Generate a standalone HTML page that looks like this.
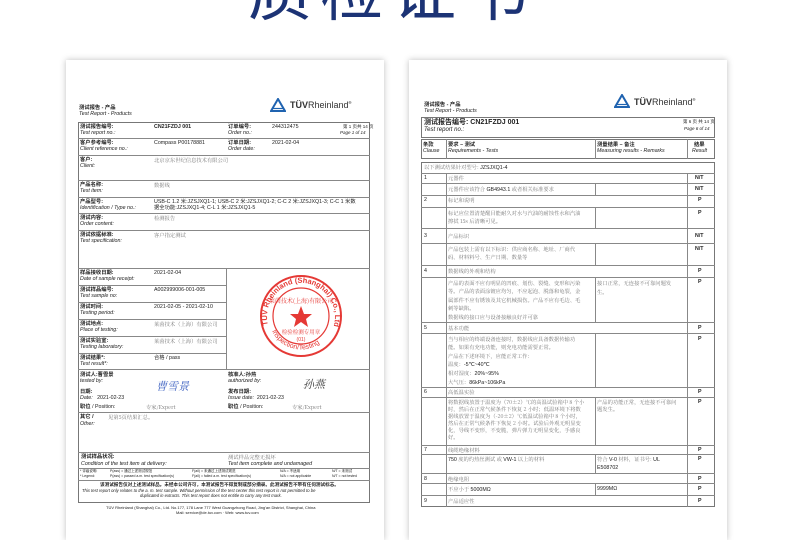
<!DOCTYPE html>
<html><head><meta charset="utf-8"><style>
*{margin:0;padding:0;box-sizing:border-box}
body{width:790px;height:530px;background:#fff;position:relative;overflow:hidden;font-family:"Liberation Sans","Noto Sans CJK SC",sans-serif;color:#222}
.title{position:absolute;left:248px;top:-44px;font-size:64px;line-height:1;color:#1c3375;letter-spacing:8px;font-family:"Noto Sans CJK SC",sans-serif;white-space:nowrap}
.page{position:absolute;top:60px;height:480px;background:#fff;box-shadow:0 0 6px rgba(0,0,0,.25)}
.t{position:absolute;font-size:5.3px;line-height:6.5px;white-space:nowrap}
.b{font-weight:bold}
.i{font-style:italic}
.g{color:#777;font-family:"Noto Serif CJK SC",serif}
.box{position:absolute;border:1px solid #777}
.h{position:absolute;height:1px;background:#888}
.v{position:absolute;width:1px;background:#888}
.logo{position:absolute;font-size:9px;font-weight:bold;color:#333;white-space:nowrap}
.logo span{font-weight:normal}
</style></head><body>
<div class="title">质检证书</div>

<!-- LEFT PAGE -->
<div class="page" style="left:66px;width:318px"></div>
<div class="t b" style="left:79px;top:105px">测试报告 - 产品</div>
<div class="t i" style="left:79px;top:111px">Test Report - Products</div>
<svg style="position:absolute;left:270px;top:98px" width="16" height="14"><polygon points="8,1 15,13 1,13" fill="none" stroke="#1f63b0" stroke-width="2"/><line x1="3" y1="10.5" x2="13" y2="10.5" stroke="#1f63b0" stroke-width="1.2"/></svg>
<div class="logo" style="left:290px;top:100px">TÜV<span>Rheinland</span><sup style="font-size:4px">®</sup></div>

<div class="box" style="left:78px;top:122px;width:292px;height:381px"></div>
<div class="h" style="left:78px;top:138px;width:292px"></div>
<div class="h" style="left:78px;top:155px;width:292px"></div>
<div class="h" style="left:78px;top:180px;width:292px"></div>
<div class="h" style="left:78px;top:197px;width:292px"></div>
<div class="h" style="left:78px;top:213px;width:292px"></div>
<div class="h" style="left:78px;top:230px;width:292px"></div>
<div class="h" style="left:78px;top:268px;width:292px"></div>
<div class="h" style="left:78px;top:285px;width:148px"></div>
<div class="h" style="left:78px;top:302px;width:148px"></div>
<div class="h" style="left:78px;top:319px;width:148px"></div>
<div class="h" style="left:78px;top:336px;width:148px"></div>
<div class="h" style="left:78px;top:353px;width:148px"></div>
<div class="v" style="left:226px;top:268px;height:101px"></div>
<div class="h" style="left:78px;top:369px;width:292px"></div>
<div class="h" style="left:78px;top:412px;width:292px"></div>
<div class="h" style="left:78px;top:452px;width:292px"></div>
<div class="h" style="left:78px;top:468px;width:292px"></div>
<div class="h" style="left:78px;top:480px;width:292px"></div>

<div class="t b" style="left:80px;top:124px">测试报告编号:</div><div class="t i" style="left:80px;top:130px">Test report no.:</div>
<div class="t b" style="left:154px;top:124px">CN21FZDJ 001</div>
<div class="t b" style="left:228px;top:124px">订单编号:</div><div class="t i" style="left:228px;top:130px">Order no.:</div>
<div class="t" style="left:272px;top:124px">244312475</div>
<div class="t" style="left:343px;top:124px;font-size:4.5px">第 1 页共 14 页</div><div class="t i" style="left:340px;top:130px;font-size:4.5px">Page 1 of 14</div>
<div class="t b" style="left:80px;top:140px">客户参考编号:</div><div class="t i" style="left:80px;top:146px">Client reference no.:</div>
<div class="t" style="left:154px;top:140px">Compass P00178881</div>
<div class="t b" style="left:228px;top:140px">订单日期:</div><div class="t i" style="left:228px;top:146px">Order date:</div>
<div class="t" style="left:272px;top:140px">2021-02-04</div>
<div class="t b" style="left:80px;top:157px">客户:</div><div class="t i" style="left:80px;top:163px">Client:</div>
<div class="t g" style="left:154px;top:157px">北京京东世纪信息技术有限公司</div>
<div class="t b" style="left:80px;top:182px">产品名称:</div><div class="t i" style="left:80px;top:188px">Test item:</div>
<div class="t g" style="left:154px;top:182px">数据线</div>
<div class="t b" style="left:80px;top:199px">产品型号:</div><div class="t i" style="left:80px;top:205px">Identification / Type no.:</div>
<div class="t" style="left:154px;top:199px">USB-C 1.2 米:JZSJXQ1-1; USB-C 2 米:JZSJXQ1-2; C-C 2 米:JZSJXQ1-3; C-C 1 米数</div>
<div class="t" style="left:154px;top:205px">据全功能:JZSJXQ1-4; C-L 1 米:JZSJXQ1-5</div>
<div class="t b" style="left:80px;top:215px">测试内容:</div><div class="t i" style="left:80px;top:221px">Order content:</div>
<div class="t g" style="left:154px;top:215px">检测报告</div>
<div class="t b" style="left:80px;top:232px">测试依据标准:</div><div class="t i" style="left:80px;top:238px">Test specification:</div>
<div class="t g" style="left:154px;top:232px">客户指定测试</div>

<div class="t b" style="left:80px;top:270px">样品接收日期:</div><div class="t i" style="left:80px;top:276px">Date of sample receipt:</div>
<div class="t" style="left:154px;top:270px">2021-02-04</div>
<div class="t b" style="left:80px;top:287px">测试样品编号:</div><div class="t i" style="left:80px;top:293px">Test sample no:</div>
<div class="t" style="left:154px;top:287px">A002999006-001-005</div>
<div class="t b" style="left:80px;top:304px">测试时间:</div><div class="t i" style="left:80px;top:310px">Testing period:</div>
<div class="t" style="left:154px;top:304px">2021-02-05 - 2021-02-10</div>
<div class="t b" style="left:80px;top:321px">测试地点:</div><div class="t i" style="left:80px;top:327px">Place of testing:</div>
<div class="t g" style="left:154px;top:321px">莱茵技术（上海）有限公司</div>
<div class="t b" style="left:80px;top:338px">测试实验室:</div><div class="t i" style="left:80px;top:344px">Testing laboratory:</div>
<div class="t g" style="left:154px;top:338px">莱茵技术（上海）有限公司</div>
<div class="t b" style="left:80px;top:355px">测试结果*:</div><div class="t i" style="left:80px;top:361px">Test result*:</div>
<div class="t" style="left:154px;top:355px">合格 / pass</div>

<svg style="position:absolute;left:258px;top:273px" width="86" height="86" viewBox="0 0 86 86">
<circle cx="43" cy="43" r="40" fill="none" stroke="#e53935" stroke-width="2"/>
<circle cx="43" cy="43" r="28" fill="none" stroke="#e53935" stroke-width="1.2"/>
<polygon points="43,33 46,41 54,41 48,46 50,54 43,49 36,54 38,46 32,41 40,41" fill="#e53935"/>
<defs><path id="arc" d="M10,52 A34,34 0 1,1 76,52"/><path id="arc2" d="M14,58 A32,32 0 0,0 72,58"/></defs>
<text font-size="7.5" fill="#e53935" font-weight="bold" font-family="Liberation Sans"><textPath href="#arc">TÜV Rheinland (Shanghai) Co., Ltd.</textPath></text>
<text font-size="7" fill="#e53935" font-family="Liberation Sans"><textPath href="#arc2">Inspection/Testing</textPath></text>
<text x="43" y="30" font-size="6" fill="#e53935" text-anchor="middle" font-family="Noto Serif CJK SC">莱茵技术(上海)有限公司</text>
<text x="43" y="61" font-size="5.5" fill="#e53935" text-anchor="middle" font-family="Noto Serif CJK SC">检验检测专用章</text>
<text x="43" y="68" font-size="5" fill="#e53935" text-anchor="middle">(01)</text>
</svg>

<div class="t b" style="left:80px;top:372px">测试人:曹雪景</div><div class="t i" style="left:80px;top:378px">tested by:</div>
<div class="t b" style="left:80px;top:389px">日期:</div><div class="t" style="left:80px;top:395px"><i>Date:</i>&nbsp;&nbsp;&nbsp;2021-02-23</div>
<div class="t" style="left:80px;top:404px"><b>职位</b> / Position:</div><div class="t g" style="left:146px;top:404px">专家/Expert</div>
<div class="t b" style="left:228px;top:372px">核准人:孙燕</div><div class="t i" style="left:228px;top:378px">authorized by:</div>
<div class="t b" style="left:228px;top:389px">发布日期:</div><div class="t" style="left:228px;top:395px"><i>Issue date:</i>&nbsp;&nbsp;2021-02-23</div>
<div class="t" style="left:228px;top:404px"><b>职位</b> / Position:</div><div class="t g" style="left:292px;top:404px">专家/Expert</div>
<div style="position:absolute;left:156px;top:378px;font-size:11px;color:#3b5fc0;font-family:'Noto Serif CJK SC';font-style:italic">曹雪景</div>
<div style="position:absolute;left:303px;top:376px;font-size:11px;color:#444;font-family:'Noto Serif CJK SC';font-style:italic">孙燕</div>

<div class="t b" style="left:80px;top:414px">其它 /</div><div class="t i" style="left:80px;top:421px">Other:</div>
<div class="t g" style="left:108px;top:414px">见第5页结果汇总。</div>
<div class="t b" style="left:81px;top:454px">测试样品状况:</div><div class="t i" style="left:81px;top:461px">Condition of the test item at delivery:</div>
<div class="t g" style="left:228px;top:454px">测试样品完整无损坏</div><div class="t i" style="left:228px;top:461px">Test item complete and undamaged</div>
<div class="t" style="left:80px;top:469px;font-size:3.5px;line-height:5px">* 评级说明:<br>* Legend:</div>
<div class="t" style="left:110px;top:469px;font-size:3.5px;line-height:5px">P(ass) = 通过上述测试规范<br>P(ass) = passed a.m. test specification(s)</div>
<div class="t" style="left:192px;top:469px;font-size:3.5px;line-height:5px">F(ail) = 未通过上述测试规范<br>F(ail) = failed a.m. test specification(s)</div>
<div class="t" style="left:280px;top:469px;font-size:3.5px;line-height:5px">N/A = 不适用<br>N/A = not applicable</div>
<div class="t" style="left:332px;top:469px;font-size:3.5px;line-height:5px">N/T = 未测试<br>N/T = not tested</div>
<div class="t b" style="left:100px;top:482px;font-size:4.6px">该测试报告仅对上述测试样品。未经本公司许可，本测试报告不得复制或部分摘录。此测试报告不带有任何测试标志。</div>
<div class="t i" style="left:82px;top:488px;font-size:4.2px;line-height:5.3px">This test report only relates to the a. m. test sample. Without permission of the test center this test report is not permitted to be</div>
<div class="t i" style="left:140px;top:493px;font-size:4.2px">duplicated in extracts. This test report does not entitle to carry any test mark.</div>
<div class="t" style="left:106px;top:505px;font-size:4px">TÜV Rheinland (Shanghai) Co., Ltd. No.177, 178 Lane 777 West Guangzhong Road, Jing'an District, Shanghai, China</div>
<div class="t" style="left:176px;top:510px;font-size:4px">Mail: service@de.tuv.com · Web: www.tuv.com</div>

<!-- RIGHT PAGE -->
<div class="page" style="left:409px;width:318px"></div>
<div class="t b" style="left:424px;top:102px">测试报告 - 产品</div>
<div class="t i" style="left:424px;top:108px">Test Report - Products</div>
<svg style="position:absolute;left:614px;top:94px" width="16" height="14"><polygon points="8,1 15,13 1,13" fill="none" stroke="#1f63b0" stroke-width="2"/><line x1="3" y1="10.5" x2="13" y2="10.5" stroke="#1f63b0" stroke-width="1.2"/></svg>
<div class="logo" style="left:634px;top:97px">TÜV<span>Rheinland</span><sup style="font-size:4px">®</sup></div>

<div class="box" style="left:421px;top:117px;width:294px;height:21px"></div>
<div class="t b" style="left:424px;top:119px;font-size:7px;line-height:8px">测试报告编号: CN21FZDJ 001</div>
<div class="t i" style="left:424px;top:127px;font-size:6px">Test report no.:</div>
<div class="t" style="left:683px;top:119px;font-size:4.5px">第 6 页 共 14 页</div><div class="t i" style="left:684px;top:126px;font-size:4.5px">Page 6 of 14</div>
<div class="box" style="left:421px;top:139px;width:294px;height:20px"></div>
<div class="v" style="left:446px;top:139px;height:20px"></div><div class="v" style="left:595px;top:139px;height:20px"></div><div class="v" style="left:687px;top:139px;height:20px"></div>
<div class="t b" style="left:423px;top:142px">条款</div><div class="t i" style="left:423px;top:148px">Clause</div>
<div class="t b" style="left:448px;top:142px">要求 – 测试</div><div class="t i" style="left:448px;top:148px">Requirements - Tests</div>
<div class="t b" style="left:597px;top:142px">测量结果 – 备注</div><div class="t i" style="left:597px;top:148px">Measuring results - Remarks</div>
<div class="t b" style="left:694px;top:142px">结果</div><div class="t i" style="left:692px;top:148px">Result</div>

<div class="box" style="left:421px;top:162px;width:294px;height:345px"></div>
<div class="t g" style="left:424px;top:164px">以下测试结果针对型号: <span style="color:#222;font-family:'Liberation Sans'">JZSJXQ1-4</span></div>
<div class="v" style="left:446px;top:173px;height:334px"></div>
<div class="v" style="left:687px;top:173px;height:334px"></div>
<div class="h" style="left:421px;top:173px;width:294px"></div>
<div class="h" style="left:421px;top:183px;width:294px"></div>
<div class="h" style="left:421px;top:195px;width:294px"></div>
<div class="h" style="left:421px;top:207px;width:294px"></div>
<div class="h" style="left:421px;top:228px;width:294px"></div>
<div class="h" style="left:421px;top:243px;width:294px"></div>
<div class="h" style="left:421px;top:265px;width:294px"></div>
<div class="h" style="left:421px;top:277px;width:294px"></div>
<div class="h" style="left:421px;top:322px;width:294px"></div>
<div class="h" style="left:421px;top:333px;width:294px"></div>
<div class="h" style="left:421px;top:387px;width:294px"></div>
<div class="h" style="left:421px;top:397px;width:294px"></div>
<div class="h" style="left:421px;top:445px;width:294px"></div>
<div class="h" style="left:421px;top:454px;width:294px"></div>
<div class="h" style="left:421px;top:473px;width:294px"></div>
<div class="h" style="left:421px;top:483px;width:294px"></div>
<div class="h" style="left:421px;top:495px;width:294px"></div>
<div class="v" style="left:595px;top:183px;height:12px"></div>
<div class="v" style="left:595px;top:207px;height:21px"></div>
<div class="v" style="left:595px;top:243px;height:22px"></div>
<div class="v" style="left:595px;top:277px;height:45px"></div>
<div class="v" style="left:595px;top:333px;height:54px"></div>
<div class="v" style="left:595px;top:397px;height:48px"></div>
<div class="v" style="left:595px;top:454px;height:19px"></div>
<div class="v" style="left:595px;top:483px;height:12px"></div>

<div class="t" style="left:424px;top:175px">1</div><div class="t g" style="left:448px;top:175px">元器件</div><div class="t b" style="left:695px;top:175px">N/T</div>
<div class="t g" style="left:448px;top:186px">元器件应该符合 <span style="color:#222;font-family:'Liberation Sans'">GB4943.1</span> 或者相关标准要求</div><div class="t b" style="left:695px;top:186px">N/T</div>
<div class="t" style="left:424px;top:197px">2</div><div class="t g" style="left:448px;top:197px">标记和说明</div><div class="t b" style="left:698px;top:197px">P</div>
<div class="t g" style="left:448px;top:209px;line-height:8px">标记应位置清楚醒目能耐久对水与汽油的耐蚀性水和汽油<br>擦拭 15s 后清晰可见。</div><div class="t b" style="left:698px;top:210px">P</div>
<div class="t" style="left:424px;top:233px">3</div><div class="t g" style="left:448px;top:233px">产品标识</div><div class="t b" style="left:695px;top:233px">N/T</div>
<div class="t g" style="left:448px;top:245px;line-height:8px">产品包装上需有以下标识：供应商名称、地址、厂商代<br>码、材料料号、生产日期、数量等</div><div class="t b" style="left:695px;top:246px">N/T</div>
<div class="t" style="left:424px;top:268px">4</div><div class="t g" style="left:448px;top:268px">数据线的外观和结构</div><div class="t b" style="left:698px;top:268px">P</div>
<div class="t g" style="left:448px;top:279px;line-height:8.4px">产品的表面不应有明显的凹痕、划伤、裂缝、变形和污染<br>等。产品的表面涂镀应均匀，不应起泡、脱落和龟裂，金<br>属部件不应有锈蚀及其它机械损伤。产品不应有毛边、毛<br>刺等缺陷。<br>数据线的接口应与设备接触良好并可靠</div>
<div class="t g" style="left:597px;top:279px;line-height:8.5px">接口正常，无连接不可靠问题发<br>生。</div><div class="t b" style="left:698px;top:279px">P</div>
<div class="t" style="left:424px;top:325px">5</div><div class="t g" style="left:448px;top:325px">基本功能</div><div class="t b" style="left:698px;top:325px">P</div>
<div class="t g" style="left:448px;top:335px;line-height:8.3px">当与相应的终端设备连接时，数据线应具备数据传输功<br>能。如果有充电功能，则充电功能需要正常。<br>产品在下述环境下，应能正常工作：<br>温度：<span style="color:#222;font-family:'Liberation Sans'">-5℃~40℃</span><br>相对湿度：<span style="color:#222;font-family:'Liberation Sans'">20%~95%</span><br>大气压：<span style="color:#222;font-family:'Liberation Sans'">86kPa~106kPa</span></div><div class="t b" style="left:698px;top:336px">P</div>
<div class="t" style="left:424px;top:389px">6</div><div class="t g" style="left:448px;top:389px">高低温实验</div><div class="t b" style="left:698px;top:389px">P</div>
<div class="t g" style="left:448px;top:399px;line-height:6.9px">将数据线放置于温度为（70±2）℃的高温试验箱中 8 个小<br>时，然后在正常气候条件下恢复 2 小时；低温环境下将数<br>据线放置于温度为（-20±2）℃低温试验箱中 8 个小时，<br>然后在正常气候条件下恢复 2 小时。试验后外观无明显变<br>化，导线不变形，不变脆，弹片弹力无明显变化，手感良<br>好。</div>
<div class="t g" style="left:597px;top:399px;line-height:7px">产品的功能正常，无连接不可靠问<br>题发生。</div><div class="t b" style="left:698px;top:399px">P</div>
<div class="t" style="left:424px;top:447px">7</div><div class="t g" style="left:448px;top:447px">线缆绝缘材料</div><div class="t b" style="left:698px;top:447px">P</div>
<div class="t g" style="left:448px;top:456px"><span style="color:#222;font-family:'Liberation Sans'">750</span> 度的灼热丝测试 或 <span style="color:#222;font-family:'Liberation Sans'">VW-1</span> 以上的材料</div>
<div class="t g" style="left:597px;top:456px;line-height:7px">符合 <span style="color:#222;font-family:'Liberation Sans'">V-0</span> 材料，证书号: <span style="color:#222;font-family:'Liberation Sans'">UL</span><br><span style="color:#222;font-family:'Liberation Sans'">E508702</span></div><div class="t b" style="left:698px;top:456px">P</div>
<div class="t" style="left:424px;top:476px">8</div><div class="t g" style="left:448px;top:476px">绝缘电阻</div><div class="t b" style="left:698px;top:476px">P</div>
<div class="t g" style="left:448px;top:486px">不应小于 <span style="color:#222;font-family:'Liberation Sans'">5000MΩ</span></div><div class="t" style="left:597px;top:486px">9999MΩ</div><div class="t b" style="left:698px;top:486px">P</div>
<div class="t" style="left:424px;top:498px">9</div><div class="t g" style="left:448px;top:498px">产品适应性</div><div class="t b" style="left:698px;top:498px">P</div>
</body></html>
